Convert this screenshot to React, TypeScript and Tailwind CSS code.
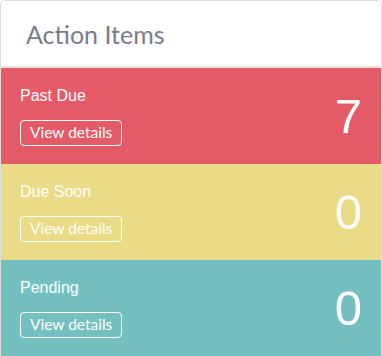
const items = [
  { label: 'Past Due', count: 7, bg: 'bg-[#e45a66]' },
  { label: 'Due Soon', count: 0, bg: 'bg-[#eadb86]' },
  { label: 'Pending', count: 0, bg: 'bg-[#74c0c1]' },
];

export default function App() {
  return (
    <div className="w-[382px] h-[356px] overflow-hidden bg-white">
      <div className="border border-[#dcdcdc] rounded-t-[5px] overflow-hidden">
        <div className="h-[67px] border-b-2 border-[#e2e2e2] flex items-center pl-[25px]">
          <h1 className="text-[25px] text-[#7a7c8d] font-['Lato',sans-serif] leading-none pt-[1px]">
            Action Items
          </h1>
        </div>
        {items.map((item) => (
          <div
            key={item.label}
            className={`${item.bg} h-[96px] flex items-center justify-between pl-[19px] pr-[19px]`}
          >
            <div className="flex flex-col items-start pt-[5px]">
              <p className="text-white text-[16px] leading-[20px] font-['Liberation_Sans',Arial,sans-serif] mt-[-6px]">
                {item.label}
              </p>
              <button className="mt-[14px] h-[26px] px-[9px] border border-white rounded-[4px] text-white text-[15.5px] leading-none font-['Lato',sans-serif]">
                View details
              </button>
            </div>
            <span className="text-white text-[49px] leading-none font-['Liberation_Sans',Arial,sans-serif]">
              {item.count}
            </span>
          </div>
        ))}
      </div>
    </div>
  );
}
